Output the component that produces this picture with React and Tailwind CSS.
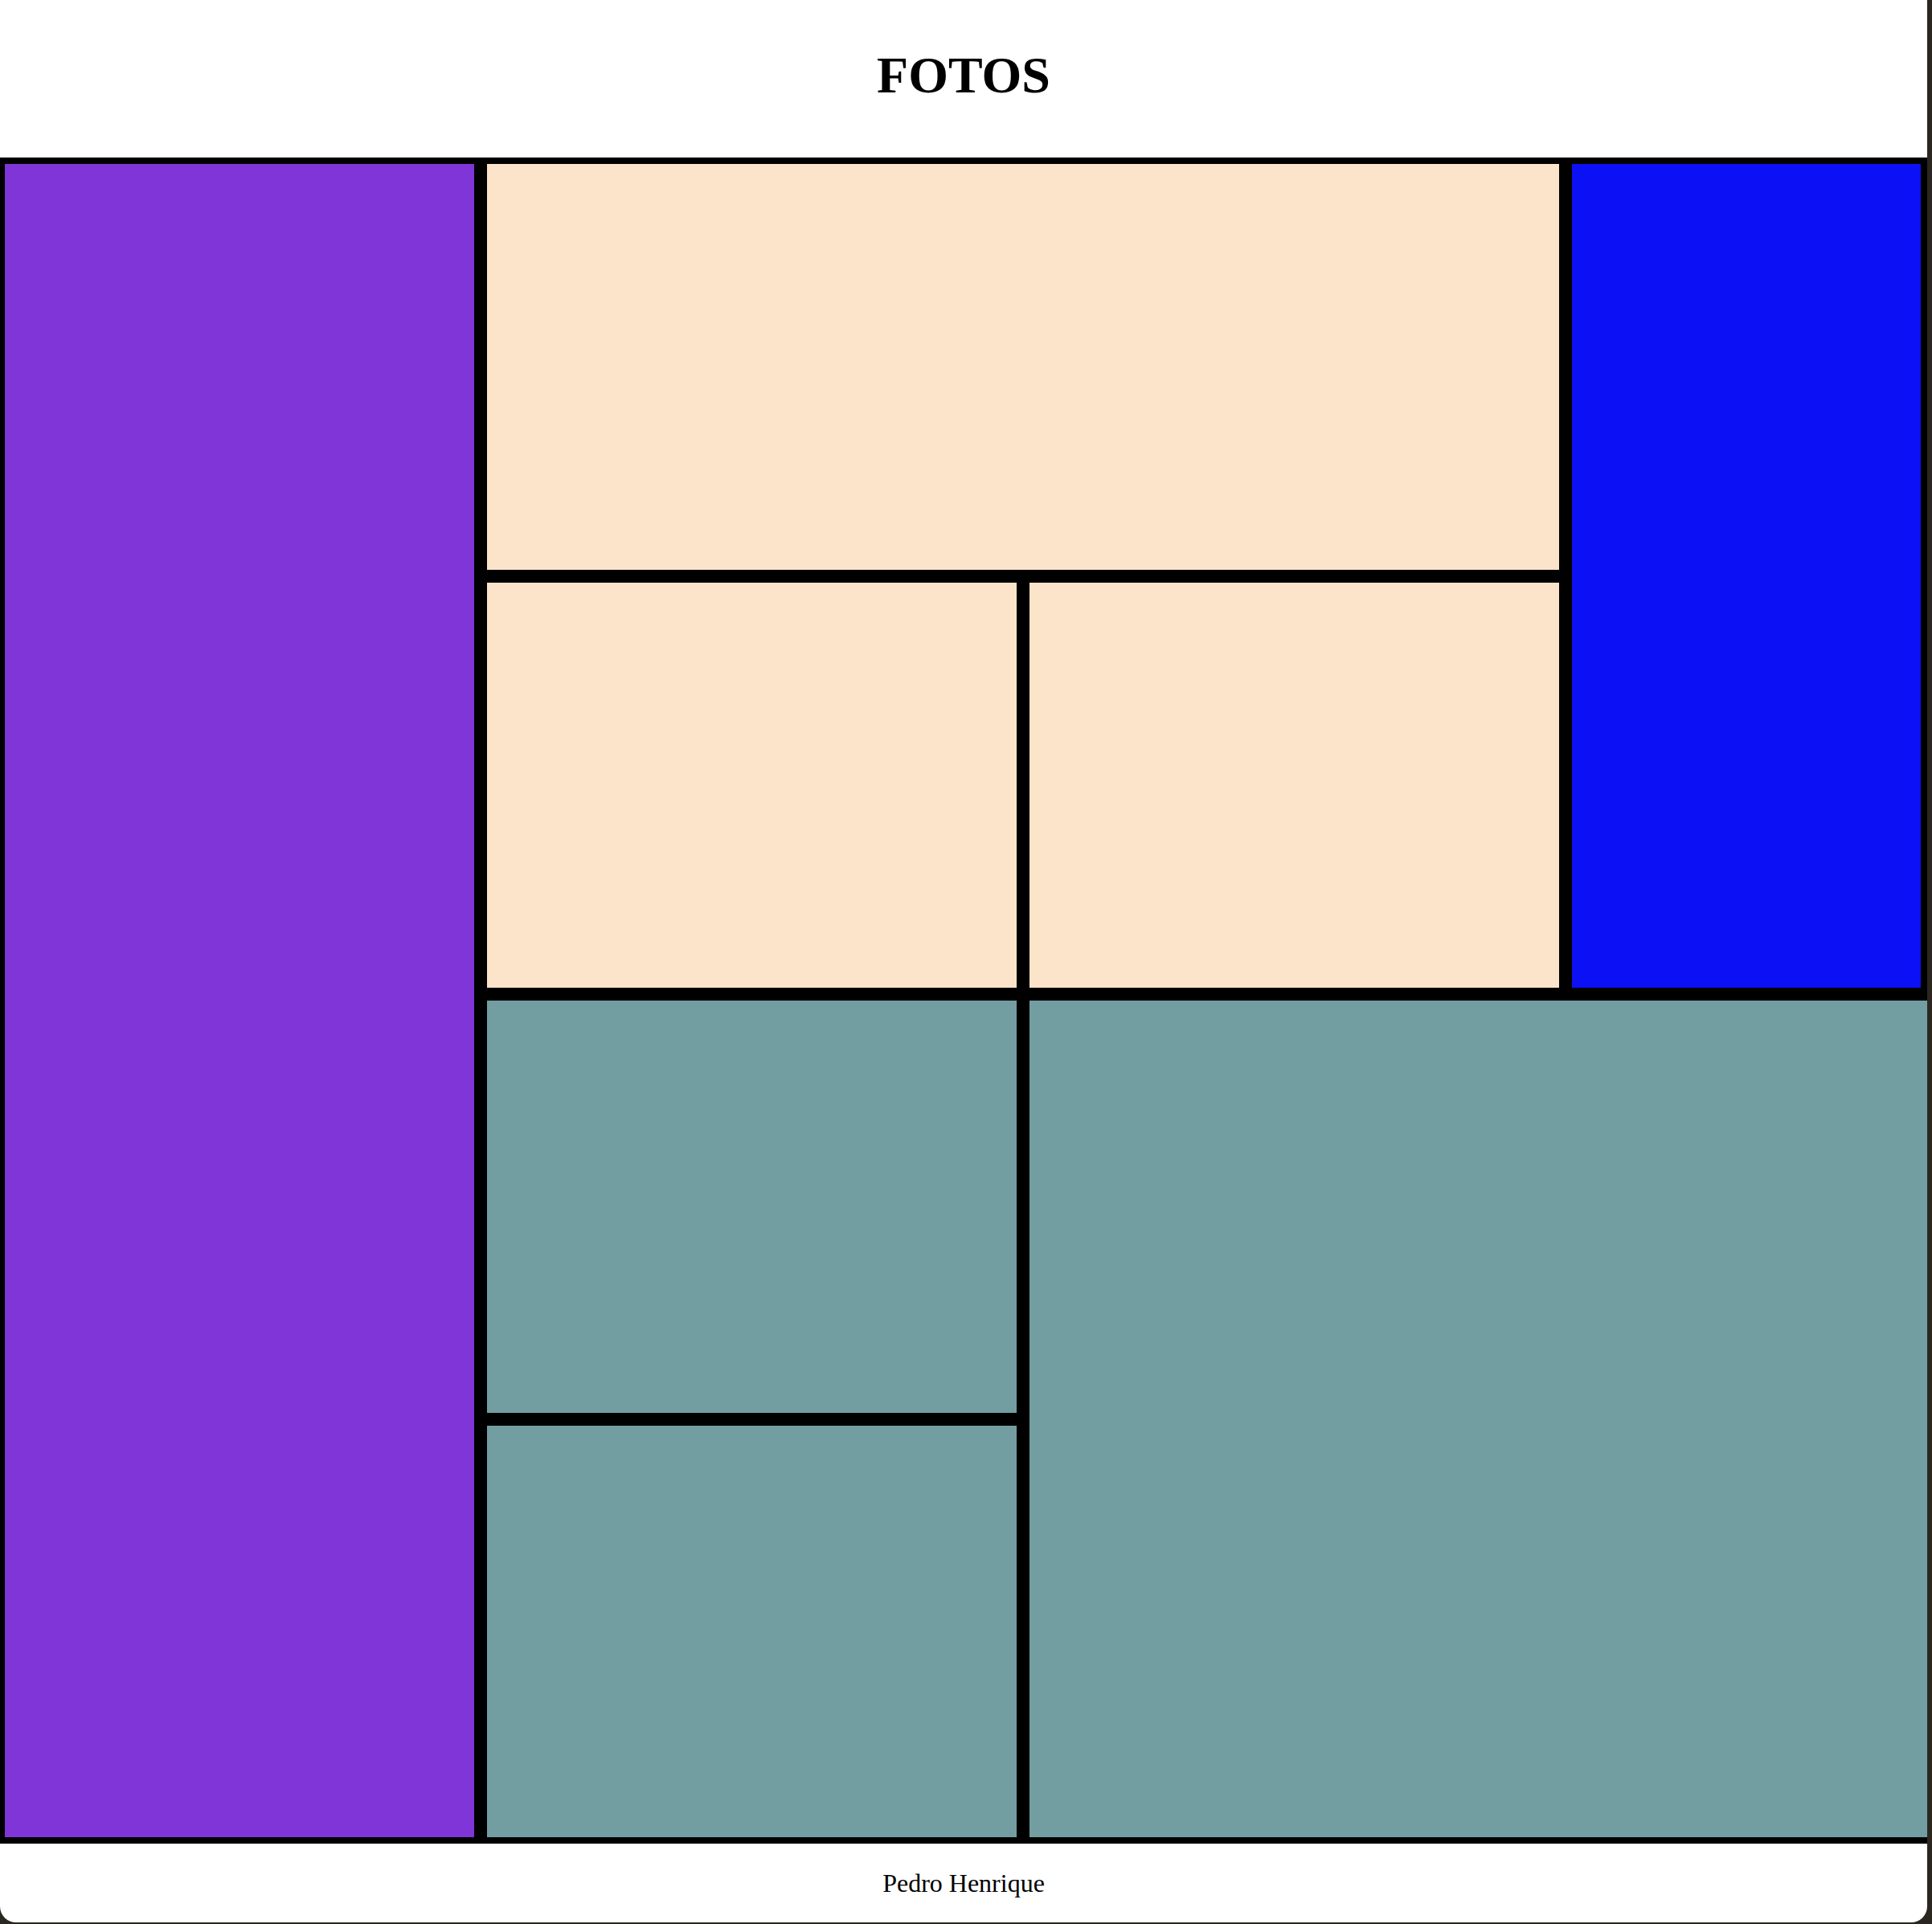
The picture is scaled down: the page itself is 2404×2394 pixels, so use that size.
export default function App() {
  return (
    <div className="w-[2404px] h-[2394px] bg-[#2b2720] flex items-start overflow-hidden">
      <div className="w-[2398px] h-[2392px] bg-white rounded-b-[20px] overflow-hidden flex flex-col">
        <header className="h-[196px] flex items-center justify-center pb-[8px]">
          <h1 className="text-[64px] font-bold leading-none text-black" style={{ fontFamily: '"Liberation Serif", "Times New Roman", serif' }}>
            FOTOS
          </h1>
        </header>
        <main className="grid grid-cols-[598px_675px_675px_450px] grid-rows-[521px_520px_529px_528px]">
          <div className="col-start-1 row-start-1 row-span-4 bg-[#8035d8] border-[8px] border-l-[6px] border-black" />
          <div className="col-start-2 col-span-2 row-start-1 bg-[#fbe4c9] border-[8px] border-black" />
          <div className="col-start-4 row-start-1 row-span-2 bg-[#0c10f5] border-[8px] border-black" />
          <div className="col-start-2 row-start-2 bg-[#fbe4c9] border-[8px] border-black" />
          <div className="col-start-3 row-start-2 bg-[#fbe4c9] border-[8px] border-black" />
          <div className="col-start-2 row-start-3 bg-[#739ea1] border-[8px] border-black" />
          <div className="col-start-2 row-start-4 bg-[#739ea1] border-[8px] border-black" />
          <div className="col-start-3 col-span-2 row-start-3 row-span-2 bg-[#739ea1] border-[8px] border-r-0 border-black" />
        </main>
        <footer className="flex-1 flex items-center justify-center">
          <p className="text-[32px] text-black" style={{ fontFamily: '"Liberation Serif", "Times New Roman", serif' }}>
            Pedro Henrique
          </p>
        </footer>
      </div>
    </div>
  );
}
